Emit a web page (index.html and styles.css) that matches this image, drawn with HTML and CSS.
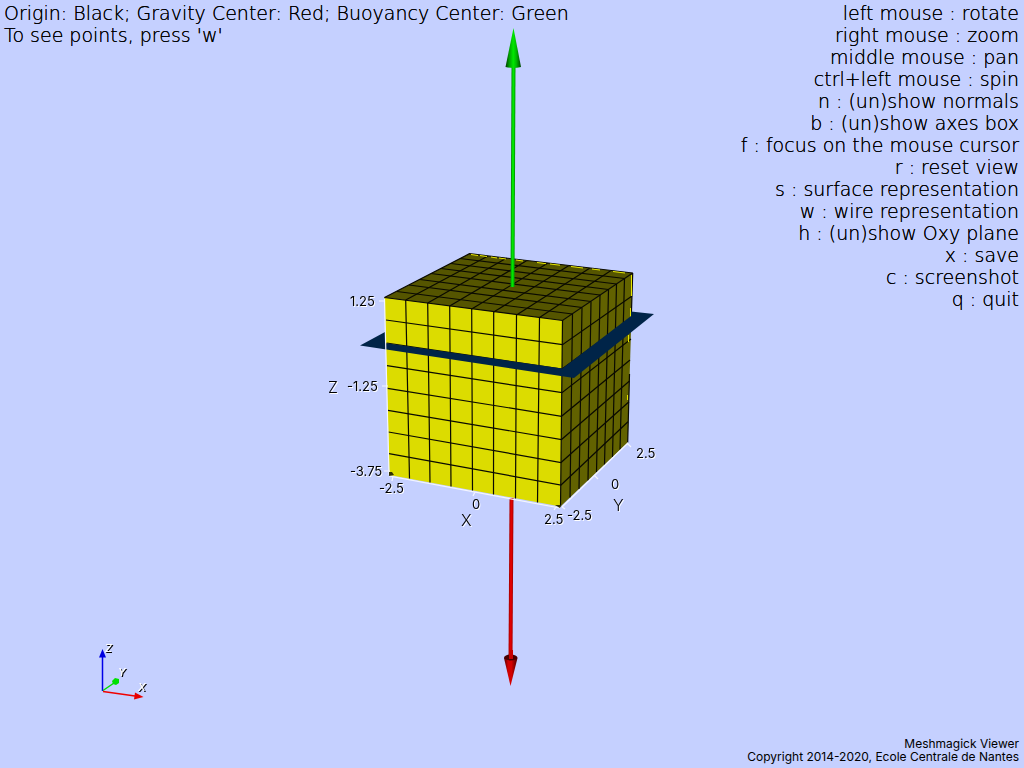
FILE: index.html
```html
<!DOCTYPE html>
<html lang="en">
<head>
<meta charset="utf-8">
<title>Meshmagick Viewer</title>
<link rel="stylesheet" href="styles.css">
</head>
<body>
<main class="viewer">
<svg class="scene" viewBox="0 0 1024 768" role="img" aria-label="Mesh of a floating box with its axes">
  <defs>
    <linearGradient id="green"><stop offset="0" stop-color="#003c00"/><stop offset=".25" stop-color="#00a000"/><stop offset=".5" stop-color="#00e800"/><stop offset=".7" stop-color="#00b800"/><stop offset="1" stop-color="#004400"/></linearGradient>
    <linearGradient id="red"><stop offset="0" stop-color="#500000"/><stop offset=".3" stop-color="#d00000"/><stop offset=".55" stop-color="#d40000"/><stop offset="1" stop-color="#480000"/></linearGradient>
  </defs>

  <!-- red arrow -->
  <path fill="#b00000" d="M509.500 498h4l-1 160h-4z"/>
  <path fill="#e00000" d="M510.500 498h2l-1 160h-2z"/>

  <!-- box faces -->
  <path fill="#dcdc00" d="M384.500 297.500L562.500 320.500L560.500 506.500L389.500 475z"/>
  <path fill="#626200" d="M562.5 320.5L632.7 273L627.7 442.5L560.5 506.5z"/>
  <path fill="#555500" d="M384.500 297.500L469.500 253.700L632.700 273L562.500 320.500z"/>

  <g class="mesh">
    <path d="M384.500 297.500L562.500 320.500L632.700 273M386 320L562.500 344.700L632 296M386.500 343L562 369L631.500 318M387 365.700L562 392.700L631 339M387.500 388.300L561.500 416.300L630 360M388 410.300L561.500 439.500L629.500 381M388.500 432L561 462.500L629 401.700M389 453.700L561 485L628 421.700"/>
    <path d="M405.700 300L409.500 478.500M427.700 303L430 482.500M449.700 306L451 486.500M471.700 309L472.500 490.500M493.700 312L493.500 494.500M516.500 315L515.500 498.500M539.500 317.500L537.500 502.500M562.500 320.500L560.500 506.500"/>
    <path d="M572.500 314L570 497.500M582 307.500L579 489M591 301.500L588 480.500M600 295L596.500 472M608.500 289.500L604.500 464.500M616.500 284L612.500 457M624.500 278.500L620 449.500M632.700 273L631 326M629.500 374L627.700 442.500"/>
    <path d="M384.500 297.500L469.500 253.700L632.700 273M405.700 300L488 256M427.700 303L506.700 258M449.700 306L527 260.500M471.700 309L548 263M493.700 312L569 265.500M516.500 315L590 268M539.500 317.500L611 270.500"/>
    <path d="M397 291.500L572.500 314M409 285L582 307.500M420 279.500L591 301.500M431 273.500L600 295M441 268.500L608.500 289.500M451 263.500L616.500 284M460 258.500L624.500 278.500"/>
  </g>
  <path class="glint" d="M471 254.500l7 1M480 255.500l7 1M491 257l6 1M499 258l7 1M516 260l7 1M537 262.500l9 1.200M550 264l10 1.200M571 266.500l12 1.500M592 269l8 1M613 271.500l12 1.500M631.500 275v21M630.500 308v9M628.500 335v7M627.500 395v5"/>

  <!-- waterplane -->
  <path fill="#002448" d="M360 345.500L385 332V343L562.300 368.500L631 316V311.500L654 314L574 378z"/>

  <!-- axes box -->
  <path class="axis" d="M384.500 299L389 475M389 476L560 508M562 507L628 443M379 301h6M382 386h6M384 471h6M393 476l-1 5M475 492l-2 4M556 507l-2 3M562 507l3 2M594 475l4 4M627 443l4 4"/>
  <path fill="#333300" d="M389 472h3l2 3-5 1zM555 505h6l-1 3z"/>

  <!-- green arrow -->
  <path fill="#00a000" d="M511.500 66h4l-1 221h-4z"/>
  <path fill="#00e600" d="M512.500 66h2l-1 221h-2z"/>
  <path fill="url(#green)" d="M513.500 28L521 67Q513 69 505.500 67z"/>
  <!-- red arrow head -->
  <path fill="url(#red)" d="M504 658L517.500 658L510.500 686z"/>
  <ellipse cx="510.700" cy="657.500" rx="6.700" ry="3" fill="#480000"/>
  <path fill="#c80000" d="M509 650h4v9h-4z"/>

  <!-- orientation marker -->
  <g fill="none" stroke-width="1.500">
    <path stroke="#0000e8" d="M102.500 691V657"/><path stroke="#00dc00" d="M103 690.500L114 683"/><path stroke="#f00000" d="M103 691.500L135 696"/>
  </g>
  <path fill="#0000e0" d="M102.500 649L106 657.500H99z"/>
  <path fill="#00e000" d="M112 681l3-3 4 1v4l-3 2-3-1z"/>
  <path fill="#e80000" d="M135 692.500L143.500 697L134 699.500z"/>

  <g class="labels">
    <text x="350" y="306">1.25</text><text x="347" y="391">-1.25</text><text x="350" y="476">-3.75</text>
    <text x="379" y="493">-2.5</text><text x="472" y="509">0</text><text x="544" y="524">2.5</text>
    <text x="567" y="520">-2.5</text><text x="611" y="489">0</text><text x="636" y="458">2.5</text>
  </g>
  <g class="names"><text x="328" y="393">Z</text><text x="461" y="526">X</text><text x="613" y="511">Y</text></g>
  <g class="marker"><text x="105" y="652">Z</text><text x="118" y="676">Y</text><text x="138" y="691">X</text></g>
</svg>

<div class="overlay">
  <header class="top">
    <div class="legend"><p>Origin: Black; Gravity Center: Red; Buoyancy Center: Green</p><p>To see points, press 'w'</p></div>
    <ul class="keys">
      <li>left mouse : rotate</li><li>right mouse : zoom</li><li>middle mouse : pan</li><li>ctrl+left mouse : spin</li><li>n : (un)show normals</li><li>b : (un)show axes box</li><li>f : focus on the mouse cursor</li><li>r : reset view</li><li>s : surface representation</li><li>w : wire representation</li><li>h : (un)show Oxy plane</li><li>x : save</li><li>c : screenshot</li><li>q : quit</li>
    </ul>
  </header>
  <footer class="credits"><p>Meshmagick Viewer</p><p>Copyright 2014-2020, Ecole Centrale de Nantes</p></footer>
</div>
</main>
</body>
</html>
```
FILE: styles.css
```css
* { box-sizing: border-box; }
body { margin: 0; background: #c5d0ff; color: #000; font-family: Inter, sans-serif; font-weight: 400; }
p, ul { margin: 0; padding: 0; list-style: none; }
.viewer { display: grid; min-height: 100vh; }
.scene, .overlay { grid-area: 1 / 1; }
.scene { width: 100%; height: 100vh; }
.overlay { display: flex; flex-direction: column; justify-content: space-between; padding: 2px 5px 5px 4px; }
.top { display: flex; justify-content: space-between; font-family: "DejaVu Sans", sans-serif; font-size: 19px; font-weight: 200; line-height: 22px; white-space: nowrap; text-shadow: 0 0 0 #000; }
.keys, .credits { text-align: right; }
.credits { font-size: 12px; line-height: 13px; }
.mesh { fill: none; stroke: #0a0a00; stroke-width: 1.2; }
.glint { fill: none; stroke: #e6e600; stroke-width: 1; }
.axis { fill: none; stroke: #f4f6ff; stroke-width: 1.2; }
.labels, .names { filter: drop-shadow(1px 1px 0 #fff); }
.labels { font-size: 13px; }
.names { font-size: 16px; font-weight: 300; }
.marker { font-size: 11px; font-style: italic; font-weight: 500; fill: #fff; filter: drop-shadow(1px 1px 0 #000); }
```
